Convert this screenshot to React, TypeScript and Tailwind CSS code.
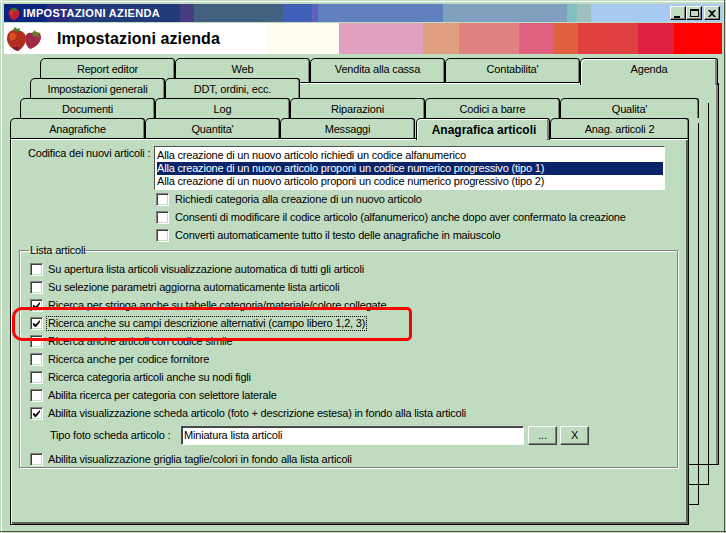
const captionBands = [
  ["w-[43px]", "bg-[#0a2480]"],
  ["w-[22px]", "bg-[#2a2a80]"],
  ["w-[111px]", "bg-[#22397a]"],
  ["w-[14px]", "bg-[#453d80]"],
  ["w-[89px]", "bg-[#426080]"],
  ["w-[29px]", "bg-[#4060b8]"],
  ["w-[6px]", "bg-[#6060c0]"],
  ["w-[125px]", "bg-[#6080c0]"],
  ["w-[124px]", "bg-[#80a0c0]"],
  ["w-[10px]", "bg-[#80c0c0]"],
  ["w-[14px]", "bg-[#a0c0c0]"],
  ["flex-1", "bg-[#a6caf0]"],
];

const headerBands = [
  ["w-[263px]", "bg-white"],
  ["w-[72px]", "bg-[#fffbf0]"],
  ["w-[84px]", "bg-[#e0a0c0]"],
  ["w-[36px]", "bg-[#e0a080]"],
  ["w-[60px]", "bg-[#e08080]"],
  ["w-[35px]", "bg-[#e06080]"],
  ["w-[24px]", "bg-[#e06040]"],
  ["w-[60px]", "bg-[#e04040]"],
  ["w-[36px]", "bg-[#e02040]"],
  ["flex-1", "bg-[#ff0000]"],
];

const topOptions = [
  { label: "Richiedi categoria alla creazione di un nuovo articolo" },
  { label: "Consenti di modificare il codice articolo (alfanumerico) anche dopo aver confermato la creazione" },
  { label: "Converti automaticamente tutto il testo delle anagrafiche in maiuscolo" },
];

const listOptions = [
  { label: "Su apertura lista articoli visualizzazione automatica di tutti gli articoli" },
  { label: "Su selezione parametri aggiorna automaticamente lista articoli" },
  { label: "Ricerca per stringa anche su tabelle categoria/materiale/colore collegate", checked: true },
  { label: "Ricerca anche su campi descrizione alternativi (campo libero 1,2, 3)", checked: true, focused: true },
  { label: "Ricerca anche articoli con codice simile" },
  { label: "Ricerca anche per codice fornitore" },
  { label: "Ricerca categoria articoli anche su nodi figli" },
  { label: "Abilita ricerca per categoria con selettore laterale" },
  { label: "Abilita visualizzazione scheda articolo (foto + descrizione estesa) in fondo alla lista articoli", checked: true },
];

function Strawberry({ className }: { className: string }) {
  return (
    <svg viewBox="0 0 20 22" className={className}>
      <path d="M10 5c4-2 8 0 8 5 0 5-4 10-8 11C6 20 2 15 2 10c0-5 4-7 8-5z" fill="#c02030" />
      <path d="M5 8c2-1 3 0 3 3s-1 4-2 3-2-5-1-6z" fill="#e04040" />
      <path d="M4 6l3-1-1-3 3 2 1-3 1 3 3-2-1 3 3 1-4 1-2 1-2-1z" fill="#408020" />
      <g fill="#801020">
        <rect x="6" y="14" width="1" height="1" />
        <rect x="10" y="10" width="1" height="1" />
        <rect x="14" y="12" width="1" height="1" />
        <rect x="10" y="16" width="1" height="1" />
        <rect x="13" y="8" width="1" height="1" />
      </g>
    </svg>
  );
}

function HeaderLogo() {
  return (
    <svg viewBox="0 0 38 24" className="w-[38px] h-6 shrink-0">
      <path d="M26 6c5-2 10 0 10 4 0 6-6 11-11 12-3-2-5-6-5-10 0-4 3-7 6-6z" fill="#a02848" />
      <path d="M8 3c6-1 13 2 13 8 0 6-4 11-8 13-5-1-11-6-11-12C2 7 4 4 8 3z" fill="#b03020" />
      <path d="M6 6c3-1 5 0 5 3s-3 5-5 4-2-6 0-7z" fill="#d85020" />
      <path d="M8 3l2-3 2 2 3-1-1 3-3 1z" fill="#508028" />
      <path d="M27 6l3-3 1 2 5 1-3 2 2 3-4-2-3 0z" fill="#608028" />
      <path d="M13 24c-3-1-5-2-6-4l8 0z" fill="#801838" />
    </svg>
  );
}

function CaptionButton({ children }: { children: React.ReactNode }) {
  return (
    <div className="w-4 h-[14px] flex items-center justify-center bg-[#c0dcc0] border-t border-l border-white border-r border-b border-r-black border-b-black shadow-[inset_-1px_-1px_0_#808080]">
      {children}
    </div>
  );
}

function Tab({ label, selected, tall, wide }: { label: string; selected?: boolean; tall?: boolean; wide?: boolean }) {
  return (
    <div
      className={`relative flex justify-center rounded-tl-[5px] rounded-tr-[3px] border-t border-l border-r border-black bg-[#c0dcc0] ${
        tall ? "border-b" : ""
      } ${
        selected
          ? "ml-px w-[134px] h-[22px] shadow-[inset_1px_1px_0_#fff,inset_-2px_0_0_#808080] z-10 font-bold text-[12px] tracking-normal pt-[5px] pl-[2px]"
          : `${wide ? "w-[139px]" : "w-[135px]"} shadow-[inset_-1px_0_0_#808080] pt-[4px]`
      }`}
    >
      {label}
    </div>
  );
}

function Checkbox({ checked }: { checked?: boolean }) {
  return (
    <div className="w-[13px] h-[13px] shrink-0 bg-white border-t border-l border-[#808080] border-r border-b border-r-white border-b-white shadow-[inset_1px_1px_0_#404040,inset_-1px_-1px_0_#c0dcc0] flex items-center justify-center">
      {checked && (
        <svg viewBox="0 0 9 9" className="w-[9px] h-[9px]">
          <path d="M1 4v2l2 2h1l4-5V1L3.500 5.500 2 4z" fill="#000" />
        </svg>
      )}
    </div>
  );
}

function OptionRow({ label, checked, focused, gap }: { label: string; checked?: boolean; focused?: boolean; gap: string }) {
  return (
    <div className={`flex items-center h-[18px] ${gap}`}>
      <Checkbox checked={checked} />
      <span className={focused ? "outline-1 outline-dotted outline-black px-[1px] -ml-[1px] leading-[13px]" : ""}>{label}</span>
    </div>
  );
}

function SmallButton({ children, width }: { children: React.ReactNode; width: string }) {
  return (
    <div className={`${width} h-[19px] flex items-center justify-center border-t border-l border-white border-r border-b border-r-[#404040] border-b-[#404040] shadow-[inset_-1px_-1px_0_#808080]`}>
      {children}
    </div>
  );
}

export default function App() {
  return (
    <div className="relative w-[726px] h-[533px] overflow-hidden bg-[#c0dcc0] pt-1 pl-1 pr-1 text-black text-[11px] tracking-[-0.19px] leading-[13px] font-['Liberation_Sans',Arial,sans-serif]">
      {/* window frame */}
      <div className="absolute left-0 right-0 top-[1px] h-px bg-white" />
      <div className="absolute left-[1px] top-0 bottom-0 w-px bg-white" />
      <div className="absolute left-0 right-0 bottom-px h-px bg-[#505050]" />
      <div className="absolute right-px top-0 bottom-0 w-px bg-[#505050]" />

      {/* caption */}
      <div className="relative flex h-[18px]">
        {captionBands.map(([w, bg], i) => (
          <div key={i} className={`${w} ${bg}`} />
        ))}
        <div className="absolute inset-y-0 left-0 flex items-center">
          <Strawberry className="w-[14px] h-[15px] ml-[3px] mr-[2px]" />
          <span className="text-white font-bold text-[11px] tracking-[0.35px]">IMPOSTAZIONI AZIENDA</span>
        </div>
        <div className="absolute right-[2px] top-[2px] flex">
          <CaptionButton>
            <div className="w-[6px] h-[2px] bg-black mt-[7px] mr-[3px]" />
          </CaptionButton>
          <CaptionButton>
            <div className="w-[9px] h-[8px] border border-t-2 border-black" />
          </CaptionButton>
          <div className="ml-[2px]">
            <CaptionButton>
              <svg viewBox="0 0 8 7" className="w-2 h-[7px]">
                <path d="M0 0h2l2 2 2-2h2L5 3.500 8 7H6L4 5 2 7H0l3-3.500z" fill="#000" />
              </svg>
            </CaptionButton>
          </div>
        </div>
      </div>

      {/* header */}
      <div className="relative flex h-[31px] mt-px">
        {headerBands.map(([w, bg], i) => (
          <div key={i} className={`${w} ${bg}`} />
        ))}
        <div className="absolute inset-y-0 left-[1px] flex items-center">
          <HeaderLogo />
          <span className="ml-[14px] text-[16px] font-bold tracking-[0.1px]">Impostazioni azienda</span>
        </div>
      </div>

      {/* tab client area */}
      <div className="relative pt-1">
        {/* pages stacked behind the front one */}
        <div className="absolute left-[36px] top-[29px] w-[679px] h-[382px] border-r border-b border-black shadow-[inset_0_1px_0_#fff,inset_-2px_0_0_#808080]" />
        <div className="absolute left-[26px] top-[49px] w-[679px] h-[382px] border-r border-b border-black" />
        <div className="absolute left-[16px] top-[69px] w-[679px] h-[382px] border-r border-b border-black" />

        <div className="relative z-[1] flex h-5 ml-[36px]">
          <div className="flex h-[25px]">
            <Tab label="Report editor" tall />
            <Tab label="Web" tall />
            <Tab label="Vendita alla cassa" tall />
            <Tab label="Contabilita'" tall />
            <div className="w-[138px] h-[27px] flex justify-center rounded-tl-[5px] rounded-tr-[3px] border-t border-l border-r border-black bg-[#c0dcc0] shadow-[inset_1px_1px_0_#fff,inset_-2px_0_0_#808080] pt-[4px]">
              Agenda
            </div>
          </div>
        </div>
        <div className="relative z-[2] flex h-5 ml-[26px]">
          <Tab label="Impostazioni generali" />
          <Tab label="DDT, ordini, ecc." />
        </div>
        <div className="relative z-[3] flex h-5 ml-[16px]">
          <Tab label="Documenti" />
          <Tab label="Log" />
          <Tab label="Riparazioni" />
          <Tab label="Codici a barre" />
          <Tab label="Qualita'" wide />
        </div>
        <div className="relative z-[5] flex h-5 ml-[6px]">
          <Tab label="Anagrafiche" />
          <Tab label="Quantita'" />
          <Tab label="Messaggi" />
          <Tab label="Anagrafica articoli" selected />
          <Tab label="Anag. articoli 2" wide />
        </div>

        {/* front page */}
        <div className="relative z-[4] ml-[6px] w-[679px] h-[387px] border border-black bg-[#c0dcc0] shadow-[inset_1px_1px_0_#fff,inset_-2px_-2px_0_#606060] pt-[7px] pl-[9px] pr-[9px]">
          <div className="flex">
            <span className="w-[125px] ml-[8px] mt-px shrink-0 whitespace-nowrap">Codifica dei nuovi articoli :</span>
            <div className="ml-px w-[511px] h-[44px] bg-white border-t border-l border-[#505050] border-r border-b border-r-white border-b-white pl-[2px] pr-px py-[2px]">
              <div className="h-[13px] whitespace-nowrap">Alla creazione di un nuovo articolo richiedi un codice alfanumerico</div>
              <div className="h-[13px] whitespace-nowrap bg-[#0a246a] text-white">Alla creazione di un nuovo articolo proponi un codice numerico progressivo (tipo 1)</div>
              <div className="h-[13px] whitespace-nowrap">Alla creazione di un nuovo articolo proponi un codice numerico progressivo (tipo 2)</div>
            </div>
          </div>

          <div className="ml-[136px]">
            {topOptions.map((o) => (
              <OptionRow key={o.label} label={o.label} gap="gap-[6px]" />
            ))}
          </div>

          <fieldset className="-ml-[1px] h-[224px] w-[659px] border border-[#808080] shadow-[1px_1px_0_#fff,inset_1px_1px_0_#fff] pl-[10px]">
            <legend className="-ml-[1px] px-[1px] leading-[13px]">Lista articoli</legend>
            <div className="mt-[3px]">
              {listOptions.map((o) => (
                <OptionRow key={o.label} label={o.label} checked={o.checked} focused={o.focused} gap="gap-[5px]" />
              ))}
            </div>
            <div className="flex items-center h-[19px] mt-[4px] ml-[20px]">
              <span className="w-[131px] shrink-0 whitespace-nowrap">Tipo foto scheda articolo :</span>
              <div className="w-[343px] h-[19px] bg-white border-t border-l border-[#505050] border-r border-b border-r-white border-b-white shadow-[inset_1px_1px_0_#404040] pl-[2px] pt-[2px]">Miniatura lista articoli</div>
              <div className="ml-[4px]"><SmallButton width="w-[29px]">...</SmallButton></div>
              <div className="ml-[3px]"><SmallButton width="w-[29px]">X</SmallButton></div>
            </div>
            <div className="mt-[5px]">
              <OptionRow label="Abilita visualizzazione griglia taglie/colori in fondo alla lista articoli" gap="gap-[5px]" />
            </div>
          </fieldset>
        </div>
      </div>

      {/* red marker drawn over the screenshot */}
      <div className="absolute z-10 left-[12px] top-[307px] w-[400px] h-[34px] border-[3px] border-[#ff0000] rounded-l-[10px] rounded-r-[5px]" />
    </div>
  );
}
